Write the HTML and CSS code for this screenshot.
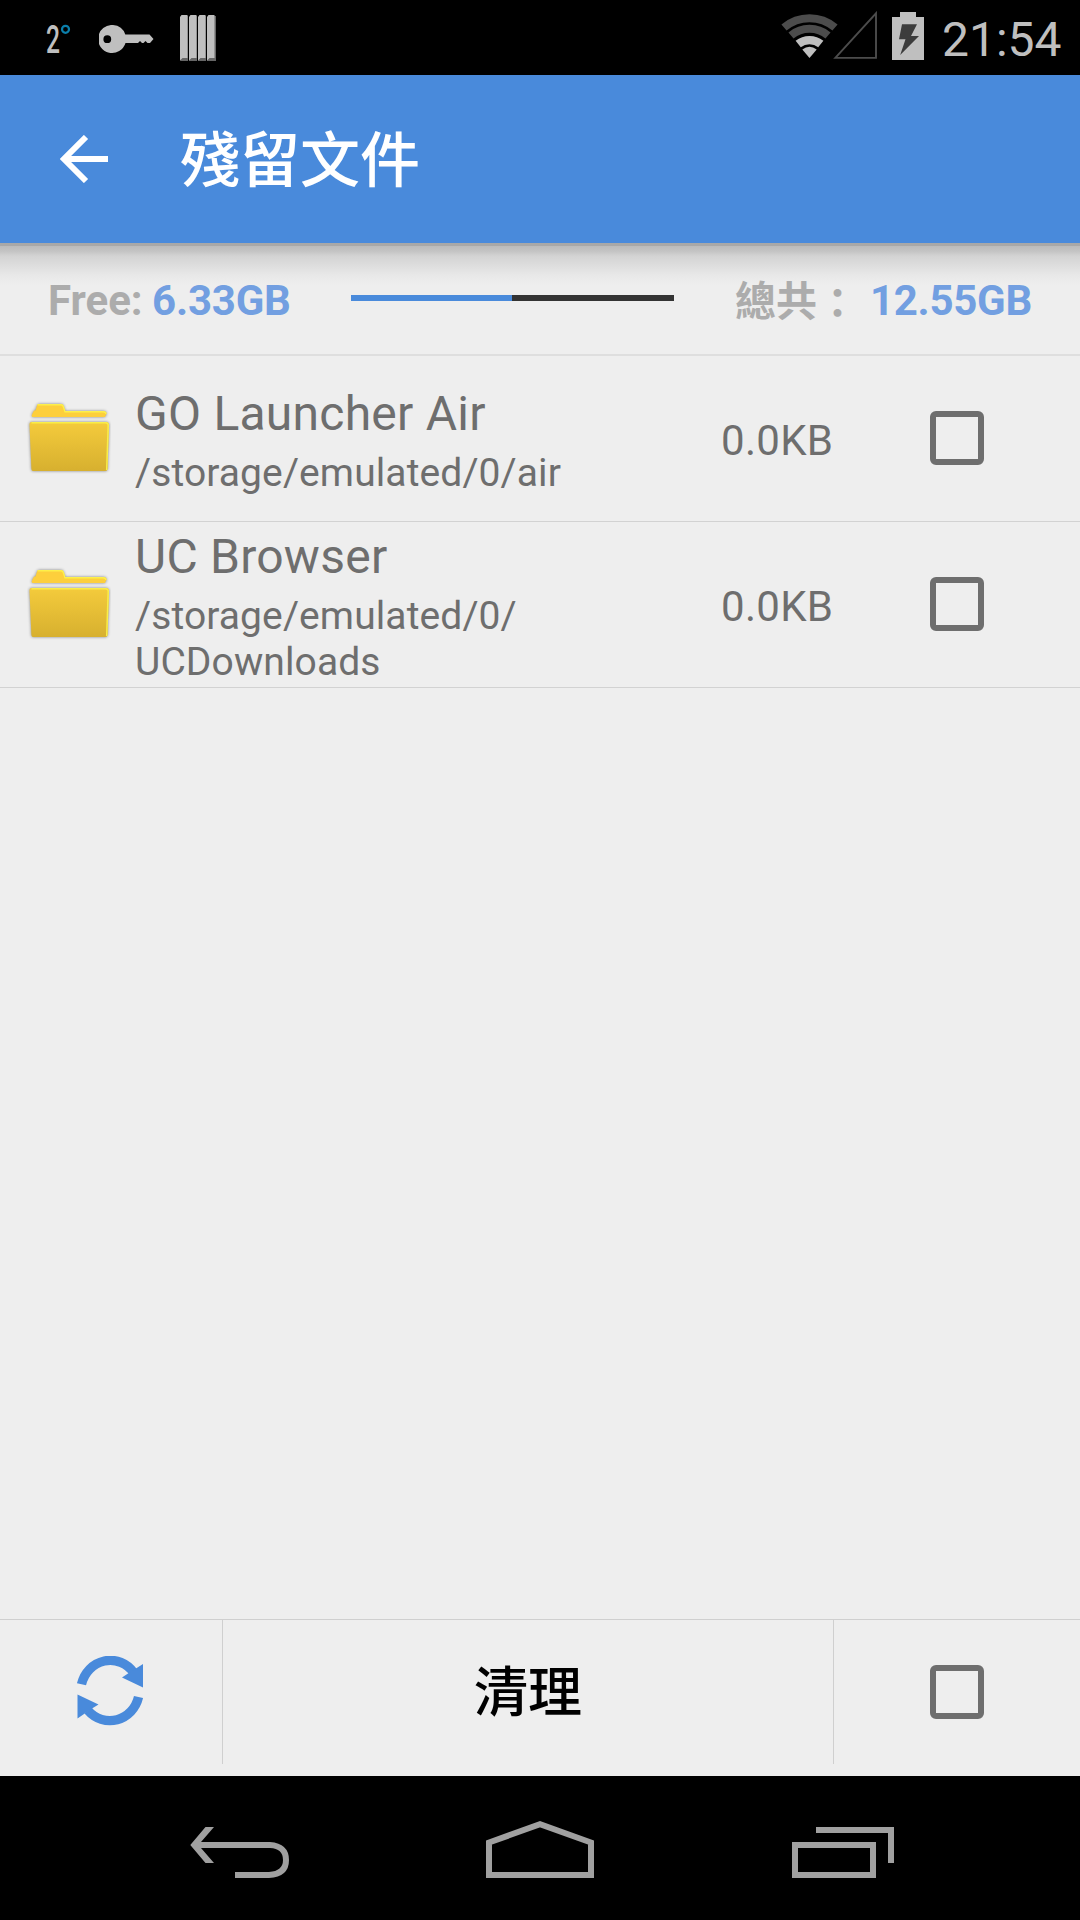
FILE: index.html
```html
<!DOCTYPE html>
<html lang="zh-Hant">
<head>
<meta charset="utf-8">
<title>殘留文件</title>
<link rel="stylesheet" href="styles.css">
</head>
<body>
<svg class="defs" width="0" height="0" aria-hidden="true">
  <defs>
    <linearGradient id="folder-front" x1="0" y1="0" x2="0" y2="1">
      <stop offset="0" stop-color="#f4cb3c"/>
      <stop offset="1" stop-color="#d7b02f"/>
    </linearGradient>
    <symbol id="folder" viewBox="0 0 84 76">
      <g class="folder-shadow">
        <path d="M5 14.5 L7 10.500 L8.500 10.500 L10 5.500 Q10.500 4 12.500 4 H33.500 Q36 4 36.500 6 L38 11 H76 Q79.500 11 79.500 13.500 L78 17 H6 Q4 17 5 14.500Z" fill="#fdcf3c"/>
        <path d="M4.500 22 H79 Q82 22 82 25 L80.500 69 Q80.300 71 78.500 71 H6 Q4.500 71 4.400 69 L2.500 25 Q2.300 22 4.500 22Z" fill="url(#folder-front)"/>
      </g>
      <path d="M10.500 4.700 H34 Q36 4.700 36.500 7 L38 11.700 H76 Q79 11.700 79 14" fill="none" stroke="#fdf04a" stroke-width="1.400"/>
      <path d="M4.500 22.700 H78.500 Q81.200 22.700 81.200 25 L79.700 70" fill="none" stroke="#f9ee48" stroke-width="1.500"/>
    </symbol>
  </defs>
</svg>
<div class="screen">
  <header class="status">
    <svg class="status-temp" width="28" height="46" viewBox="0 0 28 46">
      <text x="2" y="37" class="temp-digit" textLength="14" lengthAdjust="spacingAndGlyphs">2</text>
      <circle cx="21.500" cy="13.300" r="3.500" fill="none" stroke="#0b7fab" stroke-width="2.200"/>
    </svg>
    <svg class="status-key" width="55" height="28" viewBox="0 0 55 28">
      <path fill="#bfbfbf" fill-rule="evenodd" d="M14 0 A14 14 0 0 1 26.300 9.500 H50.500 L54.500 14 L51 18 H48.500 L46.500 16 L44.500 18 H43 L41 16 L39 18 H26.500 A14 14 0 1 1 14 0Z M8.300 10.300 A3.900 3.900 0 1 0 8.300 18.100 A3.900 3.900 0 1 0 8.300 10.300Z"/>
    </svg>
    <svg class="status-bars" width="36" height="46" viewBox="0 0 36 46">
      <path fill="#666" d="M1 44 L3 1 H8 V46 H0Z M9 44 L11 1 H17 V46 H9Z M18 44 L20 1 H26 V46 H18Z M27 44 L29 1 H36 V46 H27Z"/>
      <path fill="#bfbfbf" d="M0 2 L1.500 0 H7.500 V43 H2.500 L0 45.500Z M9 2 L10.500 0 H16.500 V43 H11.500 L9 45.500Z M18 2 L19.500 0 H25.500 V43 H20.500 L18 45.500Z M27 2 L28.500 0 H34.500 V43 H29.500 L27 45.500Z"/>
    </svg>
    <span class="spacer"></span>
    <svg class="status-wifi" width="60" height="44" viewBox="0 0 60 44">
      <g fill="none">
        <path d="M4 13.500 A39.700 39.700 0 0 1 55 13.500" stroke="#4c4c4c" stroke-width="8"/>
        <path d="M11 21.500 A29 29 0 0 1 48 21.500" stroke="#4c4c4c" stroke-width="8"/>
        <path d="M18.200 30 A18.300 18.300 0 0 1 40.800 30" stroke="#bfbfbf" stroke-width="8.400"/>
      </g>
      <path d="M22.300 35.500 Q29.500 30 36.700 35.500 L29.500 44Z" fill="#bfbfbf"/>
    </svg>
    <svg class="status-signal" width="44" height="48" viewBox="0 0 44 48">
      <path d="M2.300 46.900 L43 2.300 V46.900Z" fill="none" stroke="#4c4c4c" stroke-width="1.900"/>
    </svg>
    <svg class="status-battery" width="32" height="48" viewBox="0 0 32 48">
      <path d="M8 0 H24 V5 H32 V48 H0 V5 H8Z" fill="#bfbfbf"/>
      <path d="M10 12.200 H25 L19 24 H27 L8.200 43 L13.500 27.200 H7Z" fill="#3c3c3c"/>
    </svg>
    <span class="clock">21:54</span>
  </header>

  <nav class="appbar">
    <svg class="back" width="48" height="48" viewBox="0 0 48 48">
      <path d="M26 2 L4 24 L26 46 M4 24 H48" fill="none" stroke="#fff" stroke-width="6"/>
    </svg>
    <h1 class="title">殘留文件</h1>
  </nav>

  <section class="summary">
    <span class="label label-free">Free:</span>
    <span class="value value-free">6.33GB</span>
    <span class="meter"><span class="meter-fill" style="width: 49.8%"></span></span>
    <span class="label label-total">總共<span class="colon">：</span></span>
    <span class="value value-total">12.55GB</span>
  </section>

  <main class="list">
    <article class="row">
      <svg class="folder" width="84" height="76"><use href="#folder"/></svg>
      <div class="info">
        <h2 class="name">GO Launcher Air</h2>
        <p class="path">/storage/emulated/0/air</p>
      </div>
      <span class="size">0.0KB</span>
      <span class="check"></span>
    </article>
    <article class="row">
      <svg class="folder" width="84" height="76"><use href="#folder"/></svg>
      <div class="info">
        <h2 class="name">UC Browser</h2>
        <p class="path">/storage/emulated/0/<br>UCDownloads</p>
      </div>
      <span class="size">0.0KB</span>
      <span class="check"></span>
    </article>
  </main>

  <footer class="actions">
    <div class="refresh">
      <svg width="66" height="70" viewBox="0 0 66 70">
        <g fill="none" stroke="#498adb" stroke-width="9.300">
          <path d="M4.500 28.300 A29.500 31 0 0 1 57 17"/>
          <path d="M61.500 41 A29.500 31 0 0 1 11 54.500"/>
        </g>
        <path d="M66 8 V31.500 L45 21.500 L51 17.500Z M0.500 38.500 L21.500 48.500 L15 52.500 L0.500 62.500Z" fill="#498adb"/>
      </svg>
    </div>
    <div class="clean">清理</div>
    <div class="select-all"><span class="check"></span></div>
  </footer>

  <div class="navbar">
    <svg class="nav-back" width="100" height="52" viewBox="0 0 100 52">
      <path d="M15.500 0 H24 L11 15 H80 Q99 16.500 99 33 Q99 50 79 51 H45 V45 H79 Q93 44 93 33 Q93 21.500 80 21 H11 L24 36 H15.500 L0.300 18Z" fill="#a0a0a0"/>
    </svg>
    <svg class="nav-home" width="108" height="57" viewBox="0 0 108 57">
      <path d="M3 54 V21.500 L54 3.200 L105 21.500 V54Z" fill="none" stroke="#a0a0a0" stroke-width="6"/>
    </svg>
    <svg class="nav-recent" width="102" height="51" viewBox="0 0 102 51">
      <path d="M3 18 H81 V48 H3Z M24 3 H99 V36" fill="none" stroke="#a0a0a0" stroke-width="6"/>
    </svg>
  </div>
</div>
</body>
</html>
```
FILE: styles.css
```css
* {
  box-sizing: border-box;
}

body {
  margin: 0;
  background: #eee;
  font-family: Roboto, "Noto Sans CJK TC", sans-serif;
}

h1, h2, p {
  margin: 0;
  font-weight: 400;
}

svg {
  display: block;
  flex: none;
}

.defs {
  position: absolute;
}

.screen {
  width: 1080px;
  height: 1920px;
  display: flex;
  flex-direction: column;
  overflow: hidden;
  background: #eee;
}

/* Status bar */
.status {
  height: 75px;
  flex: none;
  display: flex;
  align-items: flex-start;
  background: #000;
}

.status-temp {
  margin: 16px 0 0 44px;
  overflow: visible;
}

.temp-digit {
  font: 500 39px Roboto, sans-serif;
  fill: #bfbfbf;
}

.status-key {
  margin: 25px 0 0 27px;
}

.status-bars {
  margin: 15px 0 0 26px;
}

.spacer {
  flex: 1;
}

.status-wifi {
  margin-top: 14px;
}

.status-signal {
  margin: 11px 0 0 -7px;
}

.status-battery {
  margin: 12px 0 0 15px;
}

.clock {
  width: 138px;
  margin-left: 18px;
  line-height: 79px;
  font-size: 48px;
  color: #bfbfbf;
  white-space: nowrap;
}

/* App bar */
.appbar {
  height: 168px;
  flex: none;
  display: flex;
  align-items: flex-start;
  background: #498adb;
}

.back {
  margin: 60px 0 0 60px;
}

.title {
  margin-left: 72px;
  padding-top: 3px;
  line-height: 168px;
  font-size: 60px;
  font-weight: 500;
  color: #fff;
}

/* Storage summary */
.summary {
  height: 113px;
  flex: none;
  display: flex;
  align-items: flex-start;
  padding-left: 48px;
  border-bottom: 2px solid #dedede;
  background: linear-gradient(#a8a8a8 3px, #bbb 3px, #c3c3c3 8px, #d3d3d3 13px, #dedede 23px, #e8e8e8 32px, #eee 42px);
  font-size: 42px;
  font-weight: 700;
  line-height: 116px;
  white-space: nowrap;
}

.label {
  color: #acacac;
}

.value {
  color: #729fe1;
}

.label-free {
  width: 104px;
}

.value-free {
  width: 199px;
  letter-spacing: -0.2px;
}

.value-total {
  letter-spacing: -0.3px;
}

.meter {
  width: 323px;
  height: 6px;
  margin-top: 52px;
  background: #333;
}

.meter-fill {
  display: block;
  height: 6px;
  background: #498adb;
}

.label-total {
  width: 135px;
  margin-left: 61px;
  padding-top: 1px;
  font-size: 41px;
}

.colon {
  position: relative;
  top: 2px;
}

/* File list */
.list {
  flex: 1;
}

.row {
  height: 166px;
  display: flex;
  align-items: center;
  padding-bottom: 1px;
  border-bottom: 1px solid #d2d2d2;
  color: #6e6e6e;
}

.folder {
  margin-left: 27px;
}

.folder-shadow {
  filter: drop-shadow(0 0 1.500px rgba(0, 0, 0, 0.45));
}

.info {
  width: 586px;
  margin-left: 24px;
  padding-top: 6px;
}

.name {
  margin-bottom: 8px;
  font-size: 48px;
  line-height: 56px;
  letter-spacing: 0.25px;
}

.path {
  font-size: 39px;
  line-height: 46px;
  letter-spacing: 0.1px;
}

.size {
  width: 209px;
  padding-top: 5px;
  font-size: 42px;
  line-height: 50px;
  letter-spacing: 0.3px;
}

.check {
  width: 54px;
  height: 54px;
  flex: none;
  border: 6px solid #6e6e6e;
  border-radius: 6px;
}

/* Bottom actions */
.actions {
  height: 157px;
  flex: none;
  display: flex;
  padding-bottom: 12px;
  border-top: 1px solid #cfcfcf;
}

.refresh {
  width: 223px;
  padding: 36px 0 0 77px;
  border-right: 1px solid #cfcfcf;
}

.clean {
  width: 611px;
  padding-top: 2px;
  border-right: 1px solid #cfcfcf;
  font-size: 54px;
  font-weight: 500;
  line-height: 143px;
  text-align: center;
  color: #000;
}

.select-all {
  display: flex;
  padding: 45px 0 0 96px;
}

/* System navigation */
.navbar {
  height: 144px;
  flex: none;
  display: flex;
  align-items: flex-start;
  background: #000;
}

.nav-back {
  margin: 51px 0 0 190px;
}

.nav-home {
  margin: 45px 0 0 196px;
}

.nav-recent {
  margin: 51px 0 0 198px;
}
```
